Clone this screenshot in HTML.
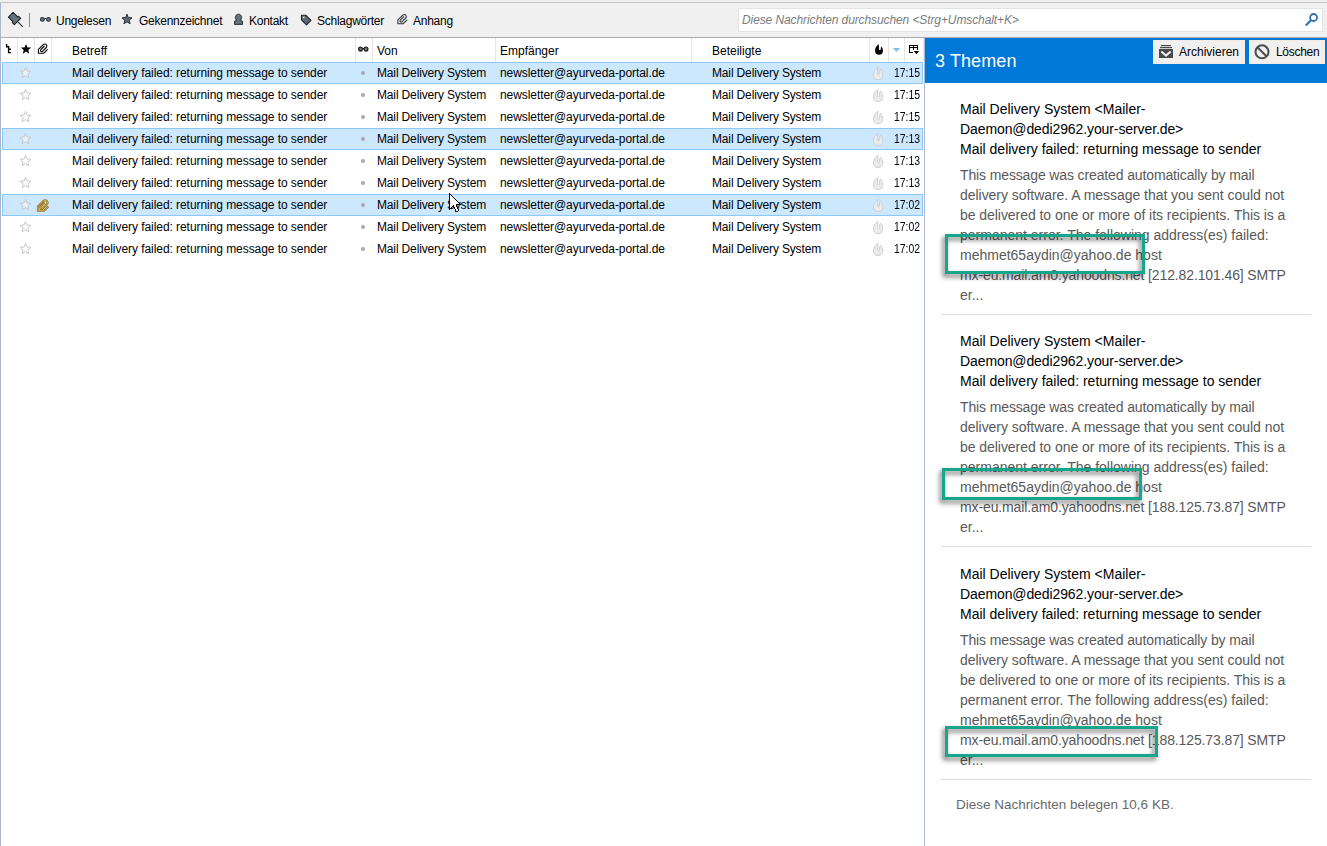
<!DOCTYPE html>
<html><head><meta charset="utf-8"><style>
*{box-sizing:border-box}
html,body{margin:0;padding:0}
body{width:1327px;height:846px;overflow:hidden;position:relative;background:#fff;font-family:"Liberation Sans",sans-serif;color:#000;font-size:12px}
.a{position:absolute}
.t{position:absolute;white-space:nowrap;line-height:14px}
svg{position:absolute;overflow:visible}
.sep{position:absolute;top:38px;width:1px;height:24px;background:#e6e6e6}
.row{position:absolute;left:2px;width:921px;height:22px}
.sel{background:#cce8ff;border:1px solid #8cc8f8}
.btn{position:absolute;top:40px;height:24px;background:#f0f0f0;border:1px solid #f2ebe6}
.ph{font-size:14px;line-height:20px;color:#000}
.pb{font-size:14px;line-height:20px;color:#595959}
.hsep{position:absolute;left:941px;width:370px;height:1px;background:#dcdcdc}
.box{position:absolute;border:3px solid #17a68b;filter:drop-shadow(-2px 3px 2.5px rgba(0,0,0,0.6))}
.tb{top:14px;letter-spacing:-0.25px}
</style></head><body>
<div class="a" style="left:0;top:0;width:1327px;height:2px;background:#f0f0f0"></div>
<div class="a" style="left:0;top:2px;width:1327px;height:1px;background:#c3c3c3"></div>
<div class="a" style="left:1px;top:3px;width:1326px;height:34px;background:#f0f0f0"></div>
<div class="a" style="left:1px;top:37px;width:1326px;height:1px;background:#aaaaaa"></div>
<div class="a" style="left:0;top:3px;width:1px;height:843px;background:#aab6ca"></div>
<div class="a" style="left:738px;top:8px;width:585px;height:24px;background:#fff;border:1px solid #e3e3e3"></div>
<div class="t" style="left:742px;top:13px;font-style:italic;color:#7b7b7b;letter-spacing:-0.1px">Diese Nachrichten durchsuchen &lt;Strg+Umschalt+K&gt;</div>
<svg style="left:1300px;top:10px" width="22" height="20" viewBox="0 0 22 20"><circle cx="13.6" cy="7.5" r="3.5" fill="none" stroke="#2a70b2" stroke-width="1.8"/><path d="M11 10.3 5.8 15.5" stroke="#2a70b2" stroke-width="2.1"/></svg>
<svg style="left:6px;top:10px" width="20" height="20" viewBox="0 0 20 20"><path d="M12.2 12.2 16.8 16.8" stroke="#2d3338" stroke-width="1.2"/><path d="M7.1 2.4 11.6 6.9 12.6 6.3 14.7 8.4 8.4 14.7 6.3 12.6 6.9 11.6 2.4 7.1Z" fill="#66737c" stroke="#1f2428" stroke-width="1.1" stroke-linejoin="round"/></svg>
<div class="a" style="left:29px;top:13px;width:1px;height:14px;background:#8a8a8a"></div>
<svg style="left:38px;top:14px" width="16" height="10" viewBox="0 0 16 10"><circle cx="4.4" cy="5.4" r="1.9" fill="#6d7880" stroke="#2b3136" stroke-width="1.1"/><circle cx="10.5" cy="5.4" r="1.9" fill="#6d7880" stroke="#2b3136" stroke-width="1.1"/><path d="M6.5 4.6H8.4" stroke="#2b3136" stroke-width="1.2"/></svg>
<svg style="left:121px;top:13px" width="12" height="12" viewBox="0 0 12 12"><path d="M6 1.2 7.4 4.6 11 4.8 8.2 7.2 9.1 10.8 6 8.8 2.9 10.8 3.8 7.2 1 4.8 4.6 4.6Z" fill="#5d6a73" stroke="#2b3136" stroke-width="1" stroke-linejoin="round"/></svg>
<svg style="left:233px;top:13px" width="12" height="13" viewBox="0 0 12 13"><path d="M5.5 1.2C7.4 1.2 8.6 2.6 8.6 4.5 8.6 5.8 8 6.8 7.2 7.2L9.5 8.2V11.4H1.5V8.2L3.8 7.2C3 6.8 2.4 5.8 2.4 4.5 2.4 2.6 3.6 1.2 5.5 1.2Z" fill="#66727b" stroke="#2b3136" stroke-width="1" stroke-linejoin="round"/></svg>
<svg style="left:300px;top:14px" width="13" height="13" viewBox="0 0 13 13"><path d="M1.5 1.3H5.9L11 6.4 6.5 10.9 1.5 5.9Z" fill="#5d6a73" stroke="#1f2428" stroke-width="1.1" stroke-linejoin="round"/><rect x="2.9" y="2.7" width="1.6" height="1.6" fill="#f0f0f0"/></svg>
<svg style="left:394px;top:11px" width="16" height="16" viewBox="0 0 16 16"><path d="M12.6 7.4 8.8 11.2H3.4V7.4L8.2 2.6Q9.8 1.3 11.3 2.7 12.6 4.1 11.3 5.5L7.6 9.2Q6.6 10 5.8 9.2 5.1 8.4 5.8 7.6L9.4 4" fill="none" stroke="#2e353a" stroke-width="1.1" transform="translate(.5 1.5)"/></svg>
<div class="t tb" style="left:56px">Ungelesen</div>
<div class="t tb" style="left:139px">Gekennzeichnet</div>
<div class="t tb" style="left:249px">Kontakt</div>
<div class="t tb" style="left:317px">Schlagwörter</div>
<div class="t tb" style="left:413px">Anhang</div>
<div class="sep" style="left:17px"></div>
<div class="sep" style="left:34px"></div>
<div class="sep" style="left:51px"></div>
<div class="sep" style="left:355px"></div>
<div class="sep" style="left:372px"></div>
<div class="sep" style="left:495px"></div>
<div class="sep" style="left:691px"></div>
<div class="sep" style="left:869px"></div>
<div class="sep" style="left:888px"></div>
<div class="sep" style="left:904px"></div>
<div class="sep" style="left:923px"></div>
<svg style="left:0;top:38px" width="17" height="24" viewBox="0 0 17 24"><path d="M6.6 6V8.8H8.6V14.6H11M8.6 11.2H11" fill="none" stroke="#000" stroke-width="1.4"/></svg>
<svg style="left:20px;top:43px" width="12" height="12" viewBox="0 0 12 12"><path d="M6 1 7.5 4.4 11.1 4.6 8.3 6.9 9.2 10.7 6 8.6 2.8 10.7 3.7 6.9 .9 4.6 4.5 4.4Z" fill="#000"/></svg>
<svg style="left:35px;top:42px" width="16" height="14" viewBox="0 0 16 14"><path d="M12.6 7.4 8.8 11.2H3.4V7.4L8.2 2.6Q9.8 1.3 11.3 2.7 12.6 4.1 11.3 5.5L7.6 9.2Q6.6 10 5.8 9.2 5.1 8.4 5.8 7.6L9.4 4" fill="none" stroke="#000" stroke-width="1.1"/></svg>
<svg style="left:356px;top:44px" width="14" height="10" viewBox="0 0 14 10"><circle cx="4.5" cy="5.1" r="1.9" fill="#777" stroke="#222" stroke-width="1.3"/><circle cx="10" cy="5.1" r="1.9" fill="#777" stroke="#222" stroke-width="1.3"/><path d="M6.4 4.6H8.1" stroke="#222" stroke-width="1.3"/></svg>
<svg style="left:872px;top:42px" width="14" height="14" viewBox="0 0 14 14"><path d="M6.6 2.3Q3.1 4.6 3.1 8.4 3.1 12.8 7 12.8 10.9 12.8 10.9 8.5 10.9 6 9.4 4.6 8.9 5.2 8.8 6.4V7Q8.6 8.2 7.8 8.2 6.9 8.2 6.9 7V5Q6.9 3.5 6.6 2.3Z" fill="#000"/></svg>
<svg style="left:892px;top:47px" width="9" height="6" viewBox="0 0 9 6"><path d="M.8 1H8.2L4.5 5Z" fill="#7fc0e8"/></svg>
<svg style="left:906px;top:42px" width="16" height="14" viewBox="0 0 16 14" shape-rendering="crispEdges"><rect x="3" y="3" width="9" height="1" fill="#000"/><rect x="3" y="5" width="9" height="1" fill="#000"/><rect x="3" y="3" width="1" height="8" fill="#000"/><rect x="3" y="10" width="4" height="1" fill="#000"/><rect x="7" y="3" width="1" height="5" fill="#000"/><rect x="11" y="3" width="1" height="5" fill="#000"/></svg><svg style="left:906px;top:42px" width="16" height="14" viewBox="0 0 16 14"><path d="M7.8 9H13.2L10.5 12.2Z" fill="#000"/></svg>
<div class="t" style="left:72px;top:44px">Betreff</div>
<div class="t" style="left:377px;top:44px">Von</div>
<div class="t" style="left:500px;top:44px">Empfänger</div>
<div class="t" style="left:712px;top:44px">Beteiligte</div>
<div class="row sel" style="top:62px"></div>
<svg style="left:19px;top:67px" width="13" height="13" viewBox="0 0 13 13"><path d="M6.50 0.40 8.03 4.00 11.92 4.34 8.97 6.90 9.85 10.71 6.50 8.70 3.15 10.71 4.03 6.90 1.08 4.34 4.97 4.00Z" fill="#e4f1fb" stroke="#c9c9c9" stroke-width="1" stroke-linejoin="round"/></svg>
<div class="t" style="left:72px;top:66px;letter-spacing:-0.06px">Mail delivery failed: returning message to sender</div>
<div class="a" style="left:361px;top:71px;width:4px;height:4px;border-radius:2px;background:#a8a8a8"></div>
<div class="t" style="left:377px;top:66px;letter-spacing:-0.15px">Mail Delivery System</div>
<div class="t" style="left:500px;top:66px;letter-spacing:-0.07px">newsletter@ayurveda-portal.de</div>
<div class="t" style="left:712px;top:66px;letter-spacing:-0.15px">Mail Delivery System</div>
<svg style="left:870px;top:64px" width="16" height="18" viewBox="0 0 16 18"><path d="M8.4 3.2Q3.4 6 3.4 10.2 3.4 15.6 8.1 15.6 12.8 15.6 12.8 10.4 12.8 7.4 10.6 5.1L9.6 6.5V9.8Q9.6 10.9 8.6 10.9 7.6 10.9 7.6 9.8V5Z" fill="#ebebeb" stroke="#cdcdcd" stroke-width=".9"/></svg>
<div class="t" style="left:894px;top:66px;transform:scaleX(0.87);transform-origin:0 0">17:15</div>
<div class="row" style="top:84px"></div>
<svg style="left:19px;top:89px" width="13" height="13" viewBox="0 0 13 13"><path d="M6.50 0.40 8.03 4.00 11.92 4.34 8.97 6.90 9.85 10.71 6.50 8.70 3.15 10.71 4.03 6.90 1.08 4.34 4.97 4.00Z" fill="#fbfbfb" stroke="#c9c9c9" stroke-width="1" stroke-linejoin="round"/></svg>
<div class="t" style="left:72px;top:88px;letter-spacing:-0.06px">Mail delivery failed: returning message to sender</div>
<div class="a" style="left:361px;top:93px;width:4px;height:4px;border-radius:2px;background:#a8a8a8"></div>
<div class="t" style="left:377px;top:88px;letter-spacing:-0.15px">Mail Delivery System</div>
<div class="t" style="left:500px;top:88px;letter-spacing:-0.07px">newsletter@ayurveda-portal.de</div>
<div class="t" style="left:712px;top:88px;letter-spacing:-0.15px">Mail Delivery System</div>
<svg style="left:870px;top:86px" width="16" height="18" viewBox="0 0 16 18"><path d="M8.4 3.2Q3.4 6 3.4 10.2 3.4 15.6 8.1 15.6 12.8 15.6 12.8 10.4 12.8 7.4 10.6 5.1L9.6 6.5V9.8Q9.6 10.9 8.6 10.9 7.6 10.9 7.6 9.8V5Z" fill="#ebebeb" stroke="#cdcdcd" stroke-width=".9"/></svg>
<div class="t" style="left:894px;top:88px;transform:scaleX(0.87);transform-origin:0 0">17:15</div>
<div class="row" style="top:106px"></div>
<svg style="left:19px;top:111px" width="13" height="13" viewBox="0 0 13 13"><path d="M6.50 0.40 8.03 4.00 11.92 4.34 8.97 6.90 9.85 10.71 6.50 8.70 3.15 10.71 4.03 6.90 1.08 4.34 4.97 4.00Z" fill="#fbfbfb" stroke="#c9c9c9" stroke-width="1" stroke-linejoin="round"/></svg>
<div class="t" style="left:72px;top:110px;letter-spacing:-0.06px">Mail delivery failed: returning message to sender</div>
<div class="a" style="left:361px;top:115px;width:4px;height:4px;border-radius:2px;background:#a8a8a8"></div>
<div class="t" style="left:377px;top:110px;letter-spacing:-0.15px">Mail Delivery System</div>
<div class="t" style="left:500px;top:110px;letter-spacing:-0.07px">newsletter@ayurveda-portal.de</div>
<div class="t" style="left:712px;top:110px;letter-spacing:-0.15px">Mail Delivery System</div>
<svg style="left:870px;top:108px" width="16" height="18" viewBox="0 0 16 18"><path d="M8.4 3.2Q3.4 6 3.4 10.2 3.4 15.6 8.1 15.6 12.8 15.6 12.8 10.4 12.8 7.4 10.6 5.1L9.6 6.5V9.8Q9.6 10.9 8.6 10.9 7.6 10.9 7.6 9.8V5Z" fill="#ebebeb" stroke="#cdcdcd" stroke-width=".9"/></svg>
<div class="t" style="left:894px;top:110px;transform:scaleX(0.87);transform-origin:0 0">17:15</div>
<div class="row sel" style="top:128px"></div>
<svg style="left:19px;top:133px" width="13" height="13" viewBox="0 0 13 13"><path d="M6.50 0.40 8.03 4.00 11.92 4.34 8.97 6.90 9.85 10.71 6.50 8.70 3.15 10.71 4.03 6.90 1.08 4.34 4.97 4.00Z" fill="#e4f1fb" stroke="#c9c9c9" stroke-width="1" stroke-linejoin="round"/></svg>
<div class="t" style="left:72px;top:132px;letter-spacing:-0.06px">Mail delivery failed: returning message to sender</div>
<div class="a" style="left:361px;top:137px;width:4px;height:4px;border-radius:2px;background:#a8a8a8"></div>
<div class="t" style="left:377px;top:132px;letter-spacing:-0.15px">Mail Delivery System</div>
<div class="t" style="left:500px;top:132px;letter-spacing:-0.07px">newsletter@ayurveda-portal.de</div>
<div class="t" style="left:712px;top:132px;letter-spacing:-0.15px">Mail Delivery System</div>
<svg style="left:870px;top:130px" width="16" height="18" viewBox="0 0 16 18"><path d="M8.4 3.2Q3.4 6 3.4 10.2 3.4 15.6 8.1 15.6 12.8 15.6 12.8 10.4 12.8 7.4 10.6 5.1L9.6 6.5V9.8Q9.6 10.9 8.6 10.9 7.6 10.9 7.6 9.8V5Z" fill="#ebebeb" stroke="#cdcdcd" stroke-width=".9"/></svg>
<div class="t" style="left:894px;top:132px;transform:scaleX(0.87);transform-origin:0 0">17:13</div>
<div class="row" style="top:150px"></div>
<svg style="left:19px;top:155px" width="13" height="13" viewBox="0 0 13 13"><path d="M6.50 0.40 8.03 4.00 11.92 4.34 8.97 6.90 9.85 10.71 6.50 8.70 3.15 10.71 4.03 6.90 1.08 4.34 4.97 4.00Z" fill="#fbfbfb" stroke="#c9c9c9" stroke-width="1" stroke-linejoin="round"/></svg>
<div class="t" style="left:72px;top:154px;letter-spacing:-0.06px">Mail delivery failed: returning message to sender</div>
<div class="a" style="left:361px;top:159px;width:4px;height:4px;border-radius:2px;background:#a8a8a8"></div>
<div class="t" style="left:377px;top:154px;letter-spacing:-0.15px">Mail Delivery System</div>
<div class="t" style="left:500px;top:154px;letter-spacing:-0.07px">newsletter@ayurveda-portal.de</div>
<div class="t" style="left:712px;top:154px;letter-spacing:-0.15px">Mail Delivery System</div>
<svg style="left:870px;top:152px" width="16" height="18" viewBox="0 0 16 18"><path d="M8.4 3.2Q3.4 6 3.4 10.2 3.4 15.6 8.1 15.6 12.8 15.6 12.8 10.4 12.8 7.4 10.6 5.1L9.6 6.5V9.8Q9.6 10.9 8.6 10.9 7.6 10.9 7.6 9.8V5Z" fill="#ebebeb" stroke="#cdcdcd" stroke-width=".9"/></svg>
<div class="t" style="left:894px;top:154px;transform:scaleX(0.87);transform-origin:0 0">17:13</div>
<div class="row" style="top:172px"></div>
<svg style="left:19px;top:177px" width="13" height="13" viewBox="0 0 13 13"><path d="M6.50 0.40 8.03 4.00 11.92 4.34 8.97 6.90 9.85 10.71 6.50 8.70 3.15 10.71 4.03 6.90 1.08 4.34 4.97 4.00Z" fill="#fbfbfb" stroke="#c9c9c9" stroke-width="1" stroke-linejoin="round"/></svg>
<div class="t" style="left:72px;top:176px;letter-spacing:-0.06px">Mail delivery failed: returning message to sender</div>
<div class="a" style="left:361px;top:181px;width:4px;height:4px;border-radius:2px;background:#a8a8a8"></div>
<div class="t" style="left:377px;top:176px;letter-spacing:-0.15px">Mail Delivery System</div>
<div class="t" style="left:500px;top:176px;letter-spacing:-0.07px">newsletter@ayurveda-portal.de</div>
<div class="t" style="left:712px;top:176px;letter-spacing:-0.15px">Mail Delivery System</div>
<svg style="left:870px;top:174px" width="16" height="18" viewBox="0 0 16 18"><path d="M8.4 3.2Q3.4 6 3.4 10.2 3.4 15.6 8.1 15.6 12.8 15.6 12.8 10.4 12.8 7.4 10.6 5.1L9.6 6.5V9.8Q9.6 10.9 8.6 10.9 7.6 10.9 7.6 9.8V5Z" fill="#ebebeb" stroke="#cdcdcd" stroke-width=".9"/></svg>
<div class="t" style="left:894px;top:176px;transform:scaleX(0.87);transform-origin:0 0">17:13</div>
<div class="row sel" style="top:194px"></div>
<svg style="left:19px;top:199px" width="13" height="13" viewBox="0 0 13 13"><path d="M6.50 0.40 8.03 4.00 11.92 4.34 8.97 6.90 9.85 10.71 6.50 8.70 3.15 10.71 4.03 6.90 1.08 4.34 4.97 4.00Z" fill="#e4f1fb" stroke="#c9c9c9" stroke-width="1" stroke-linejoin="round"/></svg>
<svg style="left:35px;top:198px" width="16" height="16" viewBox="0 0 16 16"><g transform="translate(-.94 .05) scale(1.136)"><path d="M12.6 7.4 8.8 11.2H3.4V7.4L8.2 2.6Q9.8 1.3 11.3 2.7 12.6 4.1 11.3 5.5L7.6 9.2Q6.6 10 5.8 9.2 5.1 8.4 5.8 7.6L9.4 4" fill="none" stroke="#8f6f24" stroke-width="1.8"/><path d="M12.6 7.4 8.8 11.2H3.4V7.4L8.2 2.6Q9.8 1.3 11.3 2.7 12.6 4.1 11.3 5.5L7.6 9.2Q6.6 10 5.8 9.2 5.1 8.4 5.8 7.6L9.4 4" fill="none" stroke="#dcb24a" stroke-width=".8"/></g></svg>
<div class="t" style="left:72px;top:198px;letter-spacing:-0.06px">Mail delivery failed: returning message to sender</div>
<div class="a" style="left:361px;top:203px;width:4px;height:4px;border-radius:2px;background:#a8a8a8"></div>
<div class="t" style="left:377px;top:198px;letter-spacing:-0.15px">Mail Delivery System</div>
<div class="t" style="left:500px;top:198px;letter-spacing:-0.07px">newsletter@ayurveda-portal.de</div>
<div class="t" style="left:712px;top:198px;letter-spacing:-0.15px">Mail Delivery System</div>
<svg style="left:870px;top:196px" width="16" height="18" viewBox="0 0 16 18"><path d="M8.4 3.2Q3.4 6 3.4 10.2 3.4 15.6 8.1 15.6 12.8 15.6 12.8 10.4 12.8 7.4 10.6 5.1L9.6 6.5V9.8Q9.6 10.9 8.6 10.9 7.6 10.9 7.6 9.8V5Z" fill="#ebebeb" stroke="#cdcdcd" stroke-width=".9"/></svg>
<div class="t" style="left:894px;top:198px;transform:scaleX(0.87);transform-origin:0 0">17:02</div>
<div class="row" style="top:216px"></div>
<svg style="left:19px;top:221px" width="13" height="13" viewBox="0 0 13 13"><path d="M6.50 0.40 8.03 4.00 11.92 4.34 8.97 6.90 9.85 10.71 6.50 8.70 3.15 10.71 4.03 6.90 1.08 4.34 4.97 4.00Z" fill="#fbfbfb" stroke="#c9c9c9" stroke-width="1" stroke-linejoin="round"/></svg>
<div class="t" style="left:72px;top:220px;letter-spacing:-0.06px">Mail delivery failed: returning message to sender</div>
<div class="a" style="left:361px;top:225px;width:4px;height:4px;border-radius:2px;background:#a8a8a8"></div>
<div class="t" style="left:377px;top:220px;letter-spacing:-0.15px">Mail Delivery System</div>
<div class="t" style="left:500px;top:220px;letter-spacing:-0.07px">newsletter@ayurveda-portal.de</div>
<div class="t" style="left:712px;top:220px;letter-spacing:-0.15px">Mail Delivery System</div>
<svg style="left:870px;top:218px" width="16" height="18" viewBox="0 0 16 18"><path d="M8.4 3.2Q3.4 6 3.4 10.2 3.4 15.6 8.1 15.6 12.8 15.6 12.8 10.4 12.8 7.4 10.6 5.1L9.6 6.5V9.8Q9.6 10.9 8.6 10.9 7.6 10.9 7.6 9.8V5Z" fill="#ebebeb" stroke="#cdcdcd" stroke-width=".9"/></svg>
<div class="t" style="left:894px;top:220px;transform:scaleX(0.87);transform-origin:0 0">17:02</div>
<div class="row" style="top:238px"></div>
<svg style="left:19px;top:243px" width="13" height="13" viewBox="0 0 13 13"><path d="M6.50 0.40 8.03 4.00 11.92 4.34 8.97 6.90 9.85 10.71 6.50 8.70 3.15 10.71 4.03 6.90 1.08 4.34 4.97 4.00Z" fill="#fbfbfb" stroke="#c9c9c9" stroke-width="1" stroke-linejoin="round"/></svg>
<div class="t" style="left:72px;top:242px;letter-spacing:-0.06px">Mail delivery failed: returning message to sender</div>
<div class="a" style="left:361px;top:247px;width:4px;height:4px;border-radius:2px;background:#a8a8a8"></div>
<div class="t" style="left:377px;top:242px;letter-spacing:-0.15px">Mail Delivery System</div>
<div class="t" style="left:500px;top:242px;letter-spacing:-0.07px">newsletter@ayurveda-portal.de</div>
<div class="t" style="left:712px;top:242px;letter-spacing:-0.15px">Mail Delivery System</div>
<svg style="left:870px;top:240px" width="16" height="18" viewBox="0 0 16 18"><path d="M8.4 3.2Q3.4 6 3.4 10.2 3.4 15.6 8.1 15.6 12.8 15.6 12.8 10.4 12.8 7.4 10.6 5.1L9.6 6.5V9.8Q9.6 10.9 8.6 10.9 7.6 10.9 7.6 9.8V5Z" fill="#ebebeb" stroke="#cdcdcd" stroke-width=".9"/></svg>
<div class="t" style="left:894px;top:242px;transform:scaleX(0.87);transform-origin:0 0">17:02</div>
<svg style="left:449px;top:193px" width="12" height="19" viewBox="0 0 12 19" shape-rendering="crispEdges"><rect x="0" y="0" width="1" height="1" fill="#000"/><rect x="0" y="1" width="1" height="1" fill="#000"/><rect x="1" y="1" width="1" height="1" fill="#000"/><rect x="0" y="2" width="1" height="1" fill="#000"/><rect x="1" y="2" width="1" height="1" fill="#fff"/><rect x="2" y="2" width="1" height="1" fill="#000"/><rect x="0" y="3" width="1" height="1" fill="#000"/><rect x="1" y="3" width="1" height="1" fill="#fff"/><rect x="2" y="3" width="1" height="1" fill="#fff"/><rect x="3" y="3" width="1" height="1" fill="#000"/><rect x="0" y="4" width="1" height="1" fill="#000"/><rect x="1" y="4" width="1" height="1" fill="#fff"/><rect x="2" y="4" width="1" height="1" fill="#fff"/><rect x="3" y="4" width="1" height="1" fill="#fff"/><rect x="4" y="4" width="1" height="1" fill="#000"/><rect x="0" y="5" width="1" height="1" fill="#000"/><rect x="1" y="5" width="1" height="1" fill="#fff"/><rect x="2" y="5" width="1" height="1" fill="#fff"/><rect x="3" y="5" width="1" height="1" fill="#fff"/><rect x="4" y="5" width="1" height="1" fill="#fff"/><rect x="5" y="5" width="1" height="1" fill="#000"/><rect x="0" y="6" width="1" height="1" fill="#000"/><rect x="1" y="6" width="1" height="1" fill="#fff"/><rect x="2" y="6" width="1" height="1" fill="#fff"/><rect x="3" y="6" width="1" height="1" fill="#fff"/><rect x="4" y="6" width="1" height="1" fill="#fff"/><rect x="5" y="6" width="1" height="1" fill="#fff"/><rect x="6" y="6" width="1" height="1" fill="#000"/><rect x="0" y="7" width="1" height="1" fill="#000"/><rect x="1" y="7" width="1" height="1" fill="#fff"/><rect x="2" y="7" width="1" height="1" fill="#fff"/><rect x="3" y="7" width="1" height="1" fill="#fff"/><rect x="4" y="7" width="1" height="1" fill="#fff"/><rect x="5" y="7" width="1" height="1" fill="#fff"/><rect x="6" y="7" width="1" height="1" fill="#fff"/><rect x="7" y="7" width="1" height="1" fill="#000"/><rect x="0" y="8" width="1" height="1" fill="#000"/><rect x="1" y="8" width="1" height="1" fill="#fff"/><rect x="2" y="8" width="1" height="1" fill="#fff"/><rect x="3" y="8" width="1" height="1" fill="#fff"/><rect x="4" y="8" width="1" height="1" fill="#fff"/><rect x="5" y="8" width="1" height="1" fill="#fff"/><rect x="6" y="8" width="1" height="1" fill="#fff"/><rect x="7" y="8" width="1" height="1" fill="#fff"/><rect x="8" y="8" width="1" height="1" fill="#000"/><rect x="0" y="9" width="1" height="1" fill="#000"/><rect x="1" y="9" width="1" height="1" fill="#fff"/><rect x="2" y="9" width="1" height="1" fill="#fff"/><rect x="3" y="9" width="1" height="1" fill="#fff"/><rect x="4" y="9" width="1" height="1" fill="#fff"/><rect x="5" y="9" width="1" height="1" fill="#fff"/><rect x="6" y="9" width="1" height="1" fill="#fff"/><rect x="7" y="9" width="1" height="1" fill="#fff"/><rect x="8" y="9" width="1" height="1" fill="#fff"/><rect x="9" y="9" width="1" height="1" fill="#000"/><rect x="0" y="10" width="1" height="1" fill="#000"/><rect x="1" y="10" width="1" height="1" fill="#fff"/><rect x="2" y="10" width="1" height="1" fill="#fff"/><rect x="3" y="10" width="1" height="1" fill="#fff"/><rect x="4" y="10" width="1" height="1" fill="#fff"/><rect x="5" y="10" width="1" height="1" fill="#fff"/><rect x="6" y="10" width="1" height="1" fill="#fff"/><rect x="7" y="10" width="1" height="1" fill="#fff"/><rect x="8" y="10" width="1" height="1" fill="#fff"/><rect x="9" y="10" width="1" height="1" fill="#fff"/><rect x="10" y="10" width="1" height="1" fill="#000"/><rect x="0" y="11" width="1" height="1" fill="#000"/><rect x="1" y="11" width="1" height="1" fill="#fff"/><rect x="2" y="11" width="1" height="1" fill="#fff"/><rect x="3" y="11" width="1" height="1" fill="#fff"/><rect x="4" y="11" width="1" height="1" fill="#fff"/><rect x="5" y="11" width="1" height="1" fill="#fff"/><rect x="6" y="11" width="1" height="1" fill="#fff"/><rect x="7" y="11" width="1" height="1" fill="#000"/><rect x="8" y="11" width="1" height="1" fill="#000"/><rect x="9" y="11" width="1" height="1" fill="#000"/><rect x="10" y="11" width="1" height="1" fill="#000"/><rect x="11" y="11" width="1" height="1" fill="#000"/><rect x="0" y="12" width="1" height="1" fill="#000"/><rect x="1" y="12" width="1" height="1" fill="#fff"/><rect x="2" y="12" width="1" height="1" fill="#fff"/><rect x="3" y="12" width="1" height="1" fill="#fff"/><rect x="4" y="12" width="1" height="1" fill="#000"/><rect x="5" y="12" width="1" height="1" fill="#fff"/><rect x="6" y="12" width="1" height="1" fill="#fff"/><rect x="7" y="12" width="1" height="1" fill="#000"/><rect x="0" y="13" width="1" height="1" fill="#000"/><rect x="1" y="13" width="1" height="1" fill="#fff"/><rect x="2" y="13" width="1" height="1" fill="#fff"/><rect x="3" y="13" width="1" height="1" fill="#000"/><rect x="4" y="13" width="1" height="1" fill="#000"/><rect x="5" y="13" width="1" height="1" fill="#fff"/><rect x="6" y="13" width="1" height="1" fill="#fff"/><rect x="7" y="13" width="1" height="1" fill="#000"/><rect x="0" y="14" width="1" height="1" fill="#000"/><rect x="1" y="14" width="1" height="1" fill="#fff"/><rect x="2" y="14" width="1" height="1" fill="#000"/><rect x="5" y="14" width="1" height="1" fill="#000"/><rect x="6" y="14" width="1" height="1" fill="#fff"/><rect x="7" y="14" width="1" height="1" fill="#fff"/><rect x="8" y="14" width="1" height="1" fill="#000"/><rect x="0" y="15" width="1" height="1" fill="#000"/><rect x="1" y="15" width="1" height="1" fill="#000"/><rect x="5" y="15" width="1" height="1" fill="#000"/><rect x="6" y="15" width="1" height="1" fill="#fff"/><rect x="7" y="15" width="1" height="1" fill="#fff"/><rect x="8" y="15" width="1" height="1" fill="#000"/><rect x="0" y="16" width="1" height="1" fill="#000"/><rect x="6" y="16" width="1" height="1" fill="#000"/><rect x="7" y="16" width="1" height="1" fill="#fff"/><rect x="8" y="16" width="1" height="1" fill="#fff"/><rect x="9" y="16" width="1" height="1" fill="#000"/><rect x="6" y="17" width="1" height="1" fill="#000"/><rect x="7" y="17" width="1" height="1" fill="#fff"/><rect x="8" y="17" width="1" height="1" fill="#fff"/><rect x="9" y="17" width="1" height="1" fill="#000"/><rect x="7" y="18" width="1" height="1" fill="#000"/><rect x="8" y="18" width="1" height="1" fill="#000"/></svg>
<div class="a" style="left:924px;top:38px;width:1px;height:808px;background:#aebbd0"></div>
<div class="a" style="left:925px;top:38px;width:402px;height:45px;background:#0078d7"></div>
<div class="t" style="left:935px;top:51px;font-size:18px;line-height:20px;color:#fff;letter-spacing:0.1px">3 Themen</div>
<div class="btn" style="left:1153px;width:92px"></div>
<div class="btn" style="left:1249px;width:76px"></div>
<svg style="left:1157px;top:43px" width="18" height="18" viewBox="0 0 18 18"><rect x="4" y="2" width="10" height="1.2" fill="#4a4a4a"/><rect x="3" y="4" width="12" height="1.2" fill="#4a4a4a"/><rect x="2" y="6" width="14" height="9" fill="#4a4a4a"/><path d="M4.3 8.6 9 12.6 13.7 8.6" fill="none" stroke="#f0f0f0" stroke-width="2"/></svg>
<svg style="left:1254px;top:44px" width="16" height="16" viewBox="0 0 16 16"><circle cx="8" cy="7.8" r="6.5" fill="none" stroke="#4a4a4a" stroke-width="2"/><path d="M3.6 3.4 12.4 12.2" stroke="#4a4a4a" stroke-width="2"/></svg>
<div class="t" style="left:1179px;top:45px">Archivieren</div>
<div class="t" style="left:1276px;top:45px;letter-spacing:-0.3px">Löschen</div>
<div class="t ph" style="left:960px;top:99px">Mail Delivery System &lt;Mailer-<br><span style="letter-spacing:-0.1px">Daemon@dedi2962.your-server.de&gt;</span><br>Mail delivery failed: returning message to sender</div>
<div class="t pb" style="left:960px;top:165px"><span style="letter-spacing:-0.13px">This message was created automatically by mail</span><br><span style="letter-spacing:-0.04px">delivery software. A message that you sent could not</span><br><span style="letter-spacing:-0.05px">be delivered to one or more of its recipients. This is a</span><br><span style="letter-spacing:0px">permanent error. The following address(es) failed:</span><br><span style="letter-spacing:0px">mehmet65aydin@yahoo.de host</span><br><span style="letter-spacing:-0.12px">mx-eu.mail.am0.yahoodns.net [212.82.101.46] SMTP</span><br><span style="letter-spacing:0px">er...</span></div>
<div class="hsep" style="top:314px"></div>
<div class="t ph" style="left:960px;top:331px">Mail Delivery System &lt;Mailer-<br><span style="letter-spacing:-0.1px">Daemon@dedi2962.your-server.de&gt;</span><br>Mail delivery failed: returning message to sender</div>
<div class="t pb" style="left:960px;top:397px"><span style="letter-spacing:-0.13px">This message was created automatically by mail</span><br><span style="letter-spacing:-0.04px">delivery software. A message that you sent could not</span><br><span style="letter-spacing:-0.05px">be delivered to one or more of its recipients. This is a</span><br><span style="letter-spacing:0px">permanent error. The following address(es) failed:</span><br><span style="letter-spacing:0px">mehmet65aydin@yahoo.de host</span><br><span style="letter-spacing:-0.12px">mx-eu.mail.am0.yahoodns.net [188.125.73.87] SMTP</span><br><span style="letter-spacing:0px">er...</span></div>
<div class="hsep" style="top:546px"></div>
<div class="t ph" style="left:960px;top:564px">Mail Delivery System &lt;Mailer-<br><span style="letter-spacing:-0.1px">Daemon@dedi2962.your-server.de&gt;</span><br>Mail delivery failed: returning message to sender</div>
<div class="t pb" style="left:960px;top:630px"><span style="letter-spacing:-0.13px">This message was created automatically by mail</span><br><span style="letter-spacing:-0.04px">delivery software. A message that you sent could not</span><br><span style="letter-spacing:-0.05px">be delivered to one or more of its recipients. This is a</span><br><span style="letter-spacing:0px">permanent error. The following address(es) failed:</span><br><span style="letter-spacing:0px">mehmet65aydin@yahoo.de host</span><br><span style="letter-spacing:-0.12px">mx-eu.mail.am0.yahoodns.net [188.125.73.87] SMTP</span><br><span style="letter-spacing:0px">er...</span></div>
<div class="hsep" style="top:779px"></div>
<div class="box" style="left:945px;top:234px;width:200px;height:40px"></div>
<div class="box" style="left:942px;top:468px;width:200px;height:32px"></div>
<div class="box" style="left:945px;top:726px;width:213px;height:31px"></div>
<div class="t" style="left:956px;top:797px;font-size:13.5px;line-height:16px;color:#6a6a6a">Diese Nachrichten belegen 10,6 KB.</div>
</body></html>
